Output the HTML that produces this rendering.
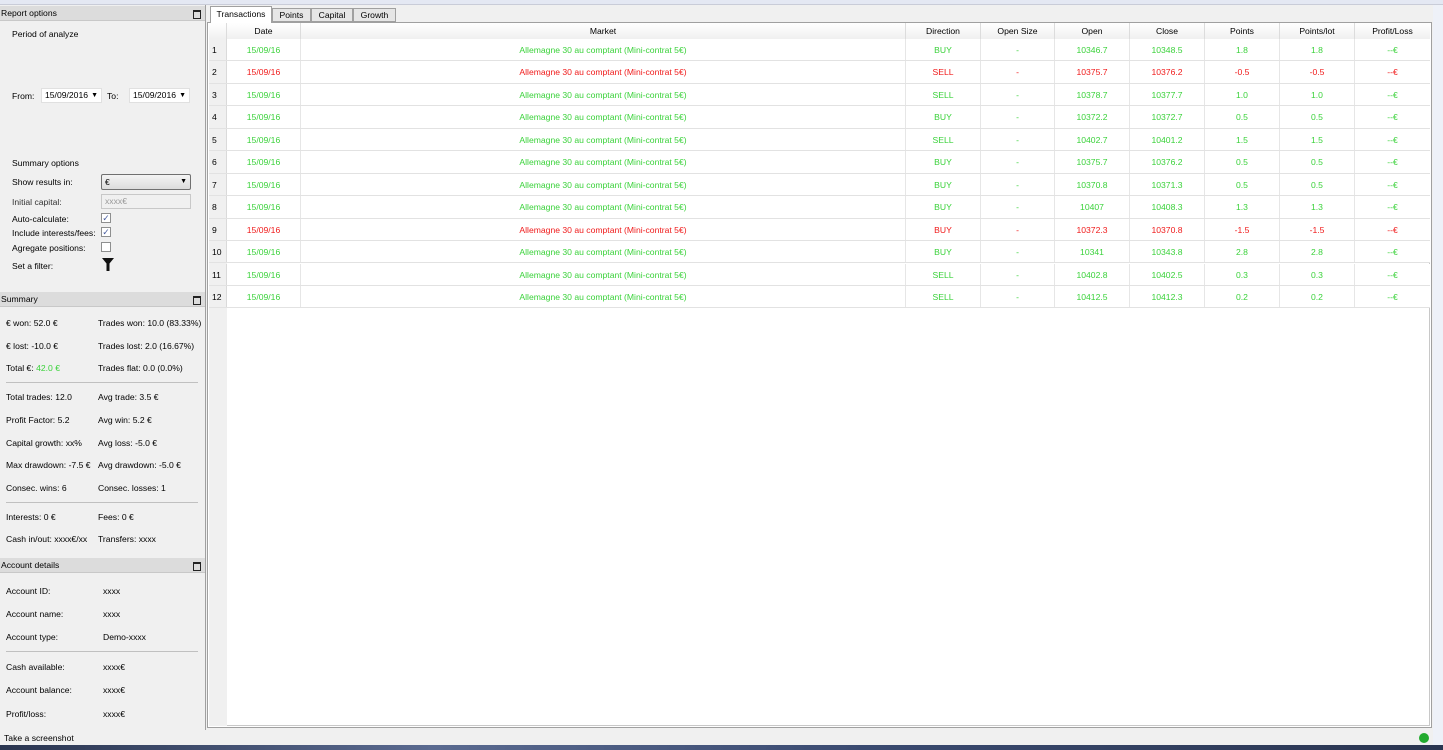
<!DOCTYPE html>
<html><head><meta charset="utf-8"><style>
*{box-sizing:border-box;margin:0;padding:0}
body{width:1443px;height:750px;overflow:hidden;background:#f0f0f0;font-family:"Liberation Sans",sans-serif;font-size:8.6px;color:#000;position:relative}
.a{position:absolute;white-space:nowrap}
.ph{position:absolute;left:0;width:205px;height:15px;background:#dcdcdc;border-bottom:1px solid #c8c8c8;padding-left:1px;line-height:15px}
.ph::after{content:"";position:absolute;right:4px;top:4px;width:6px;height:6px;border:1px solid #222;border-top-width:2px}
.hr{position:absolute;left:6px;width:192px;height:1px;background:#c0c0c0}
.g{color:#3ad23a}.r{color:#f01a1a}
.cb{position:absolute;width:10px;height:10px;border:1px solid #8e8f8f;background:#fff;font-size:9px;line-height:8px;text-align:center;color:#4a5fa0}
.row{position:absolute;left:209px;width:1221px;height:22.45px;border-bottom:1px solid #e2e2e2;background:#fff}
.row div{position:absolute;top:0;height:100%;line-height:22px;text-align:center;border-right:1px solid #e6e6e6}
.row .n{background:#f0f0f0;text-align:left;padding-left:3px;color:#000;border-right:1px solid #dadada}
.hd div{position:absolute;top:0;height:17px;line-height:17px;text-align:center;border-right:1px solid #dcdcdc}
</style></head><body>
<div class="a" style="left:0;top:0;width:1443px;height:5px;background:#e4e8f3;border-bottom:1px solid #c9ccd8"></div>
<div class="a" style="left:1433px;top:5px;width:10px;height:740px;background:#eef1f8"></div>

<div class="ph" style="top:6px">Report options</div>
<div class="a" style="left:12px;top:29px">Period of analyze</div>
<div class="a" style="left:12px;top:91px">From:</div>
<div class="a" style="left:41px;top:88px;width:61px;height:15px;background:#fff;border:1px solid #e0e0e0;padding-left:3px;line-height:13px">15/09/2016 <span style="position:absolute;right:3px;font-size:7px">▼</span></div>
<div class="a" style="left:107px;top:91px">To:</div>
<div class="a" style="left:129px;top:88px;width:61px;height:15px;background:#fff;border:1px solid #e0e0e0;padding-left:3px;line-height:13px">15/09/2016 <span style="position:absolute;right:3px;font-size:7px">▼</span></div>
<div class="a" style="left:12px;top:158px">Summary options</div>
<div class="a" style="left:12px;top:177px">Show results in:</div>
<div class="a" style="left:101px;top:174px;width:90px;height:16px;background:linear-gradient(#f4f4f4,#dcdcdc);border:1px solid #707070;border-radius:2px;padding-left:3px;line-height:14px">€<span style="position:absolute;right:3px;font-size:7px">▼</span></div>
<div class="a" style="left:12px;top:197px;color:#333">Initial capital:</div>
<div class="a" style="left:101px;top:194px;width:90px;height:15px;background:#f0f0f0;border:1px solid #c8c8c8;padding-left:3px;line-height:13px;color:#999">xxxx€</div>
<div class="a" style="left:12px;top:214px">Auto-calculate:</div>
<div class="cb" style="left:101px;top:213px">✓</div>
<div class="a" style="left:12px;top:228px">Include interests/fees:</div>
<div class="cb" style="left:101px;top:227px">✓</div>
<div class="a" style="left:12px;top:243px">Agregate positions:</div>
<div class="cb" style="left:101px;top:242px"></div>
<div class="a" style="left:12px;top:261px">Set a filter:</div>
<svg class="a" style="left:102px;top:258px" width="12" height="13" viewBox="0 0 12 13"><path d="M0 0H12L7.5 5.5V13H4.5V5.5Z" fill="#111"/></svg>

<div class="ph" style="top:292px">Summary</div>
<div class="a" style="left:6px;top:318px">€ won: 52.0 €</div><div class="a" style="left:98px;top:318px">Trades won: 10.0 (83.33%)</div>
<div class="a" style="left:6px;top:341px">€ lost: -10.0 €</div><div class="a" style="left:98px;top:341px">Trades lost: 2.0 (16.67%)</div>
<div class="a" style="left:6px;top:363px">Total €: <span class="g">42.0 €</span></div><div class="a" style="left:98px;top:363px">Trades flat: 0.0 (0.0%)</div>
<div class="hr" style="top:382px"></div>
<div class="a" style="left:6px;top:392px">Total trades: 12.0</div><div class="a" style="left:98px;top:392px">Avg trade: 3.5 €</div>
<div class="a" style="left:6px;top:415px">Profit Factor: 5.2</div><div class="a" style="left:98px;top:415px">Avg win: 5.2 €</div>
<div class="a" style="left:6px;top:438px">Capital growth: xx%</div><div class="a" style="left:98px;top:438px">Avg loss: -5.0 €</div>
<div class="a" style="left:6px;top:460px">Max drawdown: -7.5 €</div><div class="a" style="left:98px;top:460px">Avg drawdown: -5.0 €</div>
<div class="a" style="left:6px;top:483px">Consec. wins: 6</div><div class="a" style="left:98px;top:483px">Consec. losses: 1</div>
<div class="hr" style="top:502px"></div>
<div class="a" style="left:6px;top:512px">Interests: 0 €</div><div class="a" style="left:98px;top:512px">Fees: 0 €</div>
<div class="a" style="left:6px;top:534px">Cash in/out: xxxx€/xx</div><div class="a" style="left:98px;top:534px">Transfers: xxxx</div>

<div class="ph" style="top:558px">Account details</div>
<div class="a" style="left:6px;top:586px">Account ID:</div><div class="a" style="left:103px;top:586px">xxxx</div>
<div class="a" style="left:6px;top:609px">Account name:</div><div class="a" style="left:103px;top:609px">xxxx</div>
<div class="a" style="left:6px;top:632px">Account type:</div><div class="a" style="left:103px;top:632px">Demo-xxxx</div>
<div class="hr" style="top:651px"></div>
<div class="a" style="left:6px;top:662px">Cash available:</div><div class="a" style="left:103px;top:662px">xxxx€</div>
<div class="a" style="left:6px;top:685px">Account balance:</div><div class="a" style="left:103px;top:685px">xxxx€</div>
<div class="a" style="left:6px;top:709px">Profit/loss:</div><div class="a" style="left:103px;top:709px">xxxx€</div>

<div class="a" style="left:205px;top:5px;width:3px;height:725px;border-left:1px solid #a0a0a0"></div>

<div class="a" style="left:210px;top:6px;width:62px;height:17px;background:#fff;border:1px solid #a0a0a0;border-bottom:none;text-align:center;line-height:15px;z-index:2">Transactions</div>
<div class="a" style="left:272px;top:8px;width:39px;height:14px;background:#e6e6e6;border:1px solid #a0a0a0;text-align:center;line-height:12px">Points</div>
<div class="a" style="left:311px;top:8px;width:42px;height:14px;background:#e6e6e6;border:1px solid #a0a0a0;text-align:center;line-height:12px">Capital</div>
<div class="a" style="left:353px;top:8px;width:43px;height:14px;background:#e6e6e6;border:1px solid #a0a0a0;text-align:center;line-height:12px">Growth</div>

<div class="a" style="left:207px;top:22px;width:1225px;height:706px;border:1px solid #a0a0a0;background:#fff;box-shadow:inset 0 0 0 1px #fff, inset 0 0 0 2px #c8c8c8"></div>
<div class="a" style="left:209px;top:39px;width:18px;height:687px;background:#f0f0f0"></div>
<div class="a hd" style="left:209px;top:23px;width:1221px;height:17px;background:linear-gradient(#fff,#f0f0f0);border-bottom:1px solid #d5d5d5">
<div style="left:0;width:18px"></div>
<div style="left:18px;width:74px">Date</div>
<div style="left:92px;width:605px">Market</div>
<div style="left:697px;width:75px">Direction</div>
<div style="left:772px;width:74px">Open Size</div>
<div style="left:846px;width:75px">Open</div>
<div style="left:921px;width:75px">Close</div>
<div style="left:996px;width:75px">Points</div>
<div style="left:1071px;width:75px">Points/lot</div>
<div style="left:1146px;width:75px;border:none">Profit/Loss</div>
</div>
<div id="rows"></div>
<script>
var d=[["g","BUY","10346.7","10348.5","1.8"],["r","SELL","10375.7","10376.2","-0.5"],["g","SELL","10378.7","10377.7","1.0"],["g","BUY","10372.2","10372.7","0.5"],["g","SELL","10402.7","10401.2","1.5"],["g","BUY","10375.7","10376.2","0.5"],["g","BUY","10370.8","10371.3","0.5"],["g","BUY","10407","10408.3","1.3"],["r","BUY","10372.3","10370.8","-1.5"],["g","BUY","10341","10343.8","2.8"],["g","SELL","10402.8","10402.5","0.3"],["g","SELL","10412.5","10412.3","0.2"]];
var h="";d.forEach(function(r,i){var c=r[0];h+='<div class="row '+c+'" style="top:'+(39+i*22.45)+'px"><div class="n" style="left:0;width:18px">'+(i+1)+'</div><div style="left:18px;width:74px">15/09/16</div><div style="left:92px;width:605px">Allemagne 30 au comptant (Mini-contrat 5€)</div><div style="left:697px;width:75px">'+r[1]+'</div><div style="left:772px;width:74px">-</div><div style="left:846px;width:75px">'+r[2]+'</div><div style="left:921px;width:75px">'+r[3]+'</div><div style="left:996px;width:75px">'+r[4]+'</div><div style="left:1071px;width:75px">'+r[4]+'</div><div style="left:1146px;width:75px;border:none">--€</div></div>';});
document.getElementById("rows").innerHTML=h;
</script>

<div class="a" style="left:4px;top:733px">Take a screenshot</div>
<div class="a" style="left:1419px;top:733px;width:10px;height:10px;border-radius:50%;background:#22aa2e"></div>
<div class="a" style="left:0;top:745px;width:1443px;height:5px;background:linear-gradient(90deg,#2a3550,#5a6a90 30%,#3a4a70 60%,#2a3550)"></div>
</body></html>
